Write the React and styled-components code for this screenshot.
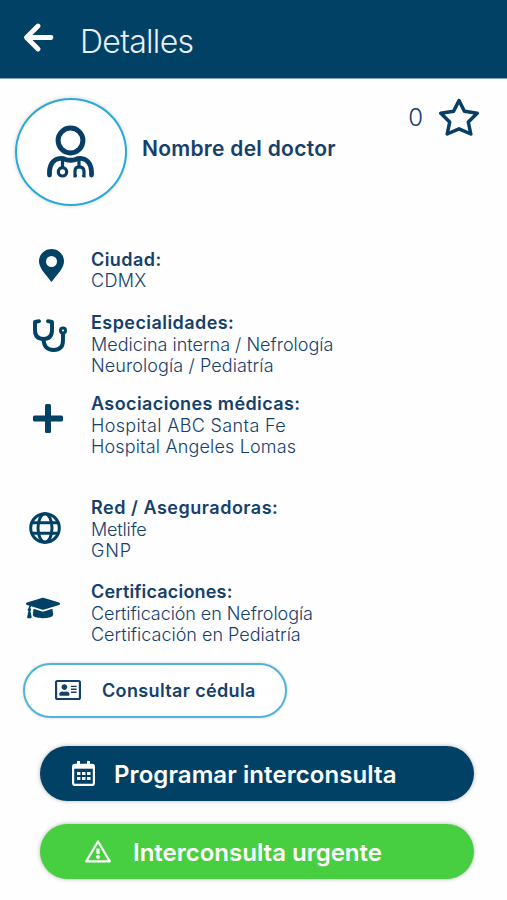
import styled, { createGlobalStyle } from 'styled-components';
import { FaGraduationCap, FaRegAddressCard } from 'react-icons/fa';

const GlobalStyle = createGlobalStyle`
  * {
    box-sizing: border-box;
  }
  body {
    margin: 0;
    background: #fefefe;
    font-family: Inter, "Liberation Sans", Arial, sans-serif;
    color: #14406c;
  }
`;

const Page = styled.div`
  width: 507px;
  height: 900px;
  overflow: hidden;
  background: #fefefe;
`;

const Header = styled.header`
  display: flex;
  align-items: center;
  height: 79px;
  padding: 4px 0 0 23px;
  background: #004165;
  border-bottom: 1px solid #7fa5bb;
  color: #fff;

  svg {
    margin: -7px 26px 0 0;
  }

  h1 {
    margin: 2px 0 0;
    font-size: 32px;
    font-weight: 300;
    line-height: 38px;
    letter-spacing: -0.7px;
    color: #e8eff5;
  }
`;

const Profile = styled.section`
  display: flex;
  align-items: flex-start;
  height: 169.5px;
  padding: 19px 28px 0 15px;
`;

const Avatar = styled.div`
  display: flex;
  align-items: center;
  justify-content: center;
  width: 112px;
  height: 108px;
  border: 2px solid #27a9dc;
  border-radius: 50%;
  background: #fff;
  box-shadow: 0 0 4px rgb(0 0 0 / 18%);
`;

const DoctorName = styled.h2`
  margin: 38px 0 0 15px;
  font-size: 21px;
  font-weight: 600;
  line-height: 26px;
  letter-spacing: ${({ $spacing }) => $spacing}px;
  white-space: nowrap;
`;

const Rating = styled.div`
  display: flex;
  align-items: center;
  gap: 16px;
  margin: -2px 0 0 auto;
  font-size: 24px;
  font-weight: 300;
  line-height: 40px;

  span {
    padding-top: 2px;
  }
`;

const Item = styled.section`
  display: flex;
  height: ${({ $height }) => $height}px;
`;

const IconCell = styled.div`
  flex: none;
  width: 91px;
  padding: ${({ $top, $left }) => `${$top}px 0 0 ${$left}px`};
  color: #004165;

  svg {
    display: block;
  }
`;

const ItemTitle = styled.h3`
  margin: 0;
  font-size: 18px;
  font-weight: 600;
  line-height: 21.6px;
  letter-spacing: ${({ $spacing }) => $spacing}px;
  white-space: nowrap;
`;

const ItemText = styled.p`
  margin: 0;
  font-size: 18px;
  font-weight: 300;
  line-height: 21.6px;
  letter-spacing: ${({ $spacing }) => $spacing}px;
  white-space: nowrap;
`;

const Button = styled.button`
  display: flex;
  align-items: center;
  width: 434px;
  height: 55px;
  margin: 0 0 23px 40px;
  padding: 2px 0 0 ${({ $left }) => $left}px;
  border: 0;
  border-radius: 28px;
  background: ${({ $color }) => $color};
  box-shadow: 0 0 4px rgb(0 0 0 / 30%);
  color: #fff;
  font-family: inherit;
  font-size: 24px;
  font-weight: 600;
  letter-spacing: ${({ $spacing }) => $spacing}px;
  white-space: nowrap;

  svg {
    flex: none;
    margin: -2px ${({ $gap }) => $gap}px 0 0;
  }
`;

const OutlineButton = styled(Button)`
  width: 264px;
  height: 55px;
  margin: 0 0 28px 23px;
  padding-top: 0;
  padding-bottom: 1px;
  border: 2px solid #4fb4df;
  background: #fff;
  box-shadow: 0 0 3px rgb(0 0 0 / 18%);
  color: #14406c;
  font-size: 18px;

  svg {
    margin-top: 0;
  }
`;

const ArrowIcon = () => (
  <svg width='31' height='29' viewBox='0 0 31 29' fill='none' stroke='currentColor' strokeWidth='4.800' strokeLinecap='round' strokeLinejoin='round'>
    <path d='M15 3L3.500 14.500L15 26M4 14.500H28' />
  </svg>
);

const DoctorIcon = () => (
  <svg width='50' height='54' viewBox='0 0 50 54' fill='none' stroke='#073e66' strokeLinecap='round'>
    <circle cx='24.500' cy='15.500' r='12.4' strokeWidth='5' />
    <path d='M3.500 50V46Q4.500 35 13.500 33.500Q16.500 33 19.500 34.500Q24.500 36 29.500 34.500Q32.500 33 35.500 33.500Q44.500 35 45.500 46V50' strokeWidth='4.800' />
    <path d='M16.500 35V42M33 35V42' strokeWidth='3.200' />
    <circle cx='16.500' cy='46.800' r='4.200' strokeWidth='3.200' />
    <path d='M29.500 50.800H29V46.300Q29 41.800 33 41.800Q38 41.800 38 46.300V50.800H37.500' strokeWidth='3.200' />
  </svg>
);

const StarIcon = () => (
  <svg width='40' height='38' viewBox='0 0 40 38' fill='none' stroke='#073e66' strokeWidth='3.500' strokeLinejoin='round'>
    <path d='M20 2.500L25.400 13.300L38.200 15.300L29.300 24L31.800 36L20 30.800L8.200 36L10.700 24L1.800 15.300L14.600 13.300Z' />
  </svg>
);

const PinIcon = () => (
  <svg width='25' height='33' viewBox='0 0 25 33' fill='currentColor' fillRule='evenodd'>
    <path d='M12.500 0C5.500 0 0 5.500 0 12.300C0 19 6 24.500 12.500 33C19 24.500 25 19 25 12.300C25 5.500 19.500 0 12.500 0ZM12.500 7A5.500 5.500 0 1 1 12.500 18A5.500 5.500 0 1 1 12.500 7Z' />
  </svg>
);

const StethoscopeIcon = () => (
  <svg width='34' height='33' viewBox='0 0 34 33' fill='none' stroke='currentColor' strokeWidth='3.900' strokeLinecap='round' strokeLinejoin='round'>
    <path d='M6 2.200L2 3V11Q2 20 10.500 20Q19 20 19 11V3L15 2.200' />
    <path d='M10.500 20.500Q11 31 20.500 31Q30 31 30 21.500V15' />
    <circle cx='30' cy='11.500' r='2.500' strokeWidth='3' />
  </svg>
);

const PlusIcon = () => (
  <svg width='30' height='29' viewBox='0 0 30 29' fill='currentColor'>
    <rect x='0' y='11.500' width='30' height='6' rx='1.500' />
    <rect x='12' y='0' width='6' height='29' rx='1.500' />
  </svg>
);

const GlobeIcon = () => (
  <svg width='32' height='32' viewBox='0 0 32 32' fill='none' stroke='currentColor' strokeWidth='3'>
    <circle cx='16' cy='16' r='14.300' />
    <ellipse cx='16' cy='16' rx='7' ry='14.300' />
    <path d='M2.500 10.800H29.500M2.500 21.200H29.500' />
  </svg>
);

const CalendarIcon = () => (
  <svg width='23' height='25' viewBox='0 0 23 25' fill='none' stroke='currentColor'>
    <rect x='1.100' y='3.900' width='20.800' height='20' rx='2' strokeWidth='2.200' />
    <path d='M1 5.700H22' strokeWidth='4' />
    <path d='M6.500 0V5M16.500 0V5' strokeWidth='3' />
    <path d='M5 12.500H18.500M5 17.500H18.500' strokeWidth='3.200' strokeDasharray='3.400 1.650' />
  </svg>
);

const WarningIcon = () => (
  <svg width='26' height='23' viewBox='0 0 26 23' fill='none' stroke='currentColor' strokeLinejoin='round'>
    <path d='M13 1.500L24.700 21.300H1.300Z' strokeWidth='2.200' />
    <path d='M13 8.500V14' strokeWidth='3.200' />
    <circle cx='13' cy='17' r='1.900' fill='currentColor' stroke='none' />
  </svg>
);

const ITEMS = [
  {
    title: 'Ciudad:',
    spacing: 0.45,
    lines: [['CDMX', 0.3]],
    icon: <PinIcon />,
    top: 0.5,
    left: 39,
    height: 63.5,
  },
  {
    title: 'Especialidades:',
    spacing: 0.44,
    lines: [['Medicina interna / Nefrología', 0], ['Neurología / Pediatría', 0.1]],
    icon: <StethoscopeIcon />,
    top: 7,
    left: 33,
    height: 81,
  },
  {
    title: 'Asociaciones médicas:',
    spacing: 0.4,
    lines: [['Hospital ABC Santa Fe', 0.36], ['Hospital Angeles Lomas', 0.16]],
    icon: <PlusIcon />,
    top: 11,
    left: 33,
    height: 104,
  },
  {
    title: 'Red / Aseguradoras:',
    spacing: 0.52,
    lines: [['Metlife', -0.15], ['GNP', 0.8]],
    icon: <GlobeIcon />,
    top: 15,
    left: 29,
    height: 84,
  },
  {
    title: 'Certificaciones:',
    spacing: 0.18,
    lines: [['Certificación en Nefrología', -0.08], ['Certificación en Pediatría', 0]],
    icon: <FaGraduationCap size={34} />,
    top: 10,
    left: 26,
    height: 82,
  },
];

const App = () => {
  return (
    <>
      <GlobalStyle />
      <Page>
        <Header>
          <ArrowIcon />
          <h1>Detalles</h1>
        </Header>
        <Profile>
          <Avatar>
            <DoctorIcon />
          </Avatar>
          <DoctorName $spacing={0.28}>Nombre del doctor</DoctorName>
          <Rating>
            <span>0</span>
            <StarIcon />
          </Rating>
        </Profile>
        {ITEMS.map((item) => (
          <Item key={item.title} $height={item.height}>
            <IconCell $top={item.top} $left={item.left}>
              {item.icon}
            </IconCell>
            <div>
              <ItemTitle $spacing={item.spacing}>{item.title}</ItemTitle>
              {item.lines.map(([text, spacing]) => (
                <ItemText key={text} $spacing={spacing}>{text}</ItemText>
              ))}
            </div>
          </Item>
        ))}
        <OutlineButton $left={30} $gap={21} $spacing={0.36}>
          <FaRegAddressCard size={26} />
          Consultar cédula
        </OutlineButton>
        <Button $color='#004165' $left={32} $gap={19} $spacing={0.08}>
          <CalendarIcon />
          Programar interconsulta
        </Button>
        <Button $color='#47cf41' $left={45} $gap={22} $spacing={0}>
          <WarningIcon />
          Interconsulta urgente
        </Button>
      </Page>
    </>
  );
};

export default App;
